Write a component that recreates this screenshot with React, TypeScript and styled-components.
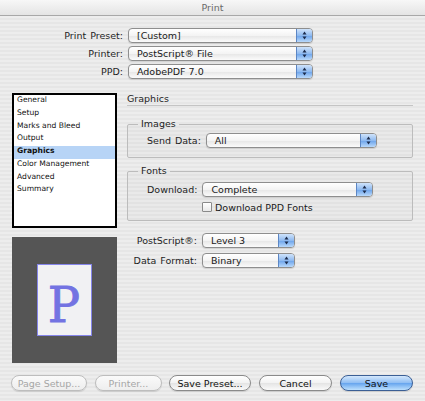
import styled, { createGlobalStyle } from 'styled-components';

const GlobalStyle = createGlobalStyle`
  html, body { margin: 0; padding: 0; }
  body {
    font-family: "DejaVu Sans", "Liberation Sans", sans-serif;
    color: #1a1a1a;
  }
`;

const Window = styled.div`
  width: 425px;
  height: 401px;
  background: repeating-linear-gradient(
    to bottom,
    #ededed 0px,
    #ededed 2px,
    #e6e6e6 2px,
    #e6e6e6 4px
  );
  overflow: hidden;
  font-size: 9.5px;
`;

const TitleBar = styled.div`
  height: 15px;
  border-bottom: 1px solid #a8a8a8;
  background: linear-gradient(to bottom, #f7f7f7, #e4e4e4);
  display: flex;
  align-items: center;
  justify-content: center;
  color: #6a6a6a;
  font-size: 9.5px;
`;

const Body = styled.div`
  padding: 12px 12px 0 12px;
`;

const TopForm = styled.div`
  display: grid;
  grid-template-columns: 111px 185px;
  column-gap: 5px;
  row-gap: 3px;
  grid-auto-rows: 15px;
`;

const Label = styled.div`
  display: flex;
  align-items: center;
  justify-content: flex-end;
  white-space: nowrap;
  color: #1e1e1e;
  word-spacing: 1px;
`;

const Popup = styled.div<{ $w?: number }>`
  position: relative;
  height: 15px;
  width: ${(p) => (p.$w ? `${p.$w}px` : 'auto')};
  box-sizing: border-box;
  border: 1px solid #8e8e8e;
  border-radius: 4px;
  background: linear-gradient(to bottom, #ffffff 0%, #f4f4f4 50%, #e6e6e6 51%, #fbfbfb 100%);
  display: flex;
  align-items: center;
  padding-left: 8px;
  white-space: nowrap;
  overflow: hidden;
  box-shadow: 0 1px 1px rgba(0, 0, 0, 0.12);
`;

const Stepper = styled.div`
  position: absolute;
  right: 0;
  top: 0;
  bottom: 0;
  width: 15px;
  border-left: 1px solid #5c86c4;
  background: linear-gradient(to bottom, #cfe3fb 0%, #8fbaf0 50%, #6aa2ea 51%, #b9d9fb 100%);
  display: flex;
  align-items: center;
  justify-content: center;
`;

const Arrows = () => (
  <svg width="5" height="9" viewBox="0 0 5 9">
    <path d="M2.5 0.5 L4.5 3.5 H0.5 Z" fill="#1c2b4a" />
    <path d="M2.5 8.5 L4.5 5.5 H0.5 Z" fill="#1c2b4a" />
  </svg>
);

const Select = ({ value, w }: { value: string; w?: number }) => (
  <Popup $w={w}>
    {value}
    <Stepper>
      <Arrows />
    </Stepper>
  </Popup>
);

const Main = styled.div`
  display: grid;
  grid-template-columns: 105px 286px;
  column-gap: 10px;
  margin-top: 14px;
`;

const LeftCol = styled.div`
  display: flex;
  flex-direction: column;
  gap: 9px;
`;

const List = styled.ul`
  margin: 0;
  padding: 0;
  list-style: none;
  height: 135px;
  box-sizing: border-box;
  border: 2px solid #000;
  background: #fff;
  font-size: 7.6px;
`;

const Item = styled.li<{ $sel?: boolean }>`
  height: 12.75px;
  line-height: 9px;
  padding-left: 3px;
  background: ${(p) => (p.$sel ? '#b7d4f6' : 'transparent')};
  font-weight: ${(p) => (p.$sel ? 'bold' : 'normal')};
  color: #111;
  white-space: nowrap;
`;

const Preview = styled.div`
  height: 126px;
  background: #555555;
  display: flex;
  align-items: center;
  justify-content: center;
`;

const Page = styled.div`
  width: 55px;
  height: 72px;
  box-sizing: border-box;
  border: 1px solid #8585ea;
  background: #f1f1f3;
  display: flex;
  align-items: center;
  justify-content: center;
  color: #7373e2;
  font-family: "DejaVu Serif", "Liberation Serif", serif;
  font-size: 48px;
  line-height: 1;
  padding-top: 10px;
  padding-right: 1px;
  -webkit-text-stroke: 0.9px #7373e2;
`;

const RightCol = styled.div`
  display: flex;
  flex-direction: column;
`;

const Header = styled.div`
  height: 12px;
  line-height: 12px;
  border-bottom: 1px solid #c4c4c4;
  color: #1e1e1e;
`;

const Group = styled.fieldset<{ $top: number; $h: number; $pad: number }>`
  margin: ${(p) => p.$top}px 0 0 0;
  padding: ${(p) => p.$pad}px 0 0 19px;
  height: ${(p) => p.$h}px;
  box-sizing: border-box;
  border: 1px solid #bcbcbc;
  border-radius: 2px;
  background: rgba(0, 0, 0, 0.015);
  display: flex;
  flex-direction: column;
  gap: 5px;
`;

const Legend = styled.legend`
  margin-left: -9px;
  padding: 0 3px;
  color: #1e1e1e;
  line-height: 10px;
`;

const FieldRow = styled.div`
  display: flex;
  align-items: center;
  gap: 5px;
  height: 15px;
`;

const CheckRow = styled.label`
  display: flex;
  align-items: center;
  gap: 3px;
  margin-left: 55px;
  height: 10px;
`;

const Check = styled.span`
  width: 10px;
  height: 10px;
  box-sizing: border-box;
  border: 1px solid #8a8a8a;
  border-radius: 1px;
  background: linear-gradient(to bottom, #ffffff, #e9e9e9);
`;

const BottomForm = styled.div`
  display: grid;
  grid-template-columns: 70px 93px;
  column-gap: 5px;
  row-gap: 6px;
  grid-auto-rows: 14px;
  margin-top: 12px;
`;

const Footer = styled.div`
  display: flex;
  align-items: center;
  margin-top: 12px;
`;

const Button = styled.button<{ $w: number; $gap?: number; $kind?: 'off' | 'default' }>`
  width: ${(p) => p.$w}px;
  margin-left: ${(p) => p.$gap ?? 0}px;
  height: 16px;
  padding: 0;
  border-radius: 8px;
  font-family: inherit;
  font-size: 9.5px;
  border: 1px solid
    ${(p) => (p.$kind === 'default' ? '#3b5f95' : p.$kind === 'off' ? '#bdbdbd' : '#8a8a8a')};
  color: ${(p) => (p.$kind === 'off' ? '#a6a6a6' : '#111')};
  background: ${(p) =>
    p.$kind === 'default'
      ? 'linear-gradient(to bottom, #d3e7fc 0%, #8ebdf3 50%, #65a4ee 51%, #bde0fd 100%)'
      : p.$kind === 'off'
      ? 'linear-gradient(to bottom, #fafafa, #eeeeee)'
      : 'linear-gradient(to bottom, #ffffff 0%, #f2f2f2 50%, #e4e4e4 51%, #fafafa 100%)'};
  box-shadow: 0 1px 1px rgba(0, 0, 0, 0.12);
`;

export default function App() {
  return (
    <>
      <GlobalStyle />
      <Window>
        <TitleBar>Print</TitleBar>
        <Body>
          <TopForm>
            <Label>Print Preset:</Label>
            <Select value="[Custom]" />
            <Label>Printer:</Label>
            <Select value="PostScript® File" />
            <Label>PPD:</Label>
            <Select value="AdobePDF 7.0" />
          </TopForm>

          <Main>
            <LeftCol>
              <List>
                <Item>General</Item>
                <Item>Setup</Item>
                <Item>Marks and Bleed</Item>
                <Item>Output</Item>
                <Item $sel>Graphics</Item>
                <Item>Color Management</Item>
                <Item>Advanced</Item>
                <Item>Summary</Item>
              </List>
              <Preview>
                <Page>P</Page>
              </Preview>
            </LeftCol>

            <RightCol>
              <Header>Graphics</Header>
              <Group $top={13} $h={39} $pad={4}>
                <Legend>Images</Legend>
                <FieldRow>
                  <Label>Send Data:</Label>
                  <Select value="All" w={171} />
                </FieldRow>
              </Group>
              <Group $top={8} $h={55} $pad={6}>
                <Legend>Fonts</Legend>
                <FieldRow>
                  <Label>Download:</Label>
                  <Select value="Complete" w={171} />
                </FieldRow>
                <CheckRow>
                  <Check />
                  Download PPD Fonts
                </CheckRow>
              </Group>
              <BottomForm>
                <Label>PostScript®:</Label>
                <Select value="Level 3" />
                <Label>Data Format:</Label>
                <Select value="Binary" />
              </BottomForm>
            </RightCol>
          </Main>

          <Footer>
            <Button $w={76} $gap={-1} $kind="off">Page Setup...</Button>
            <Button $w={67} $gap={8} $kind="off">Printer...</Button>
            <Button $w={82} $gap={7}>Save Preset...</Button>
            <Button $w={73} $gap={8}>Cancel</Button>
            <Button $w={73} $gap={8} $kind="default">Save</Button>
          </Footer>
        </Body>
      </Window>
    </>
  );
}
